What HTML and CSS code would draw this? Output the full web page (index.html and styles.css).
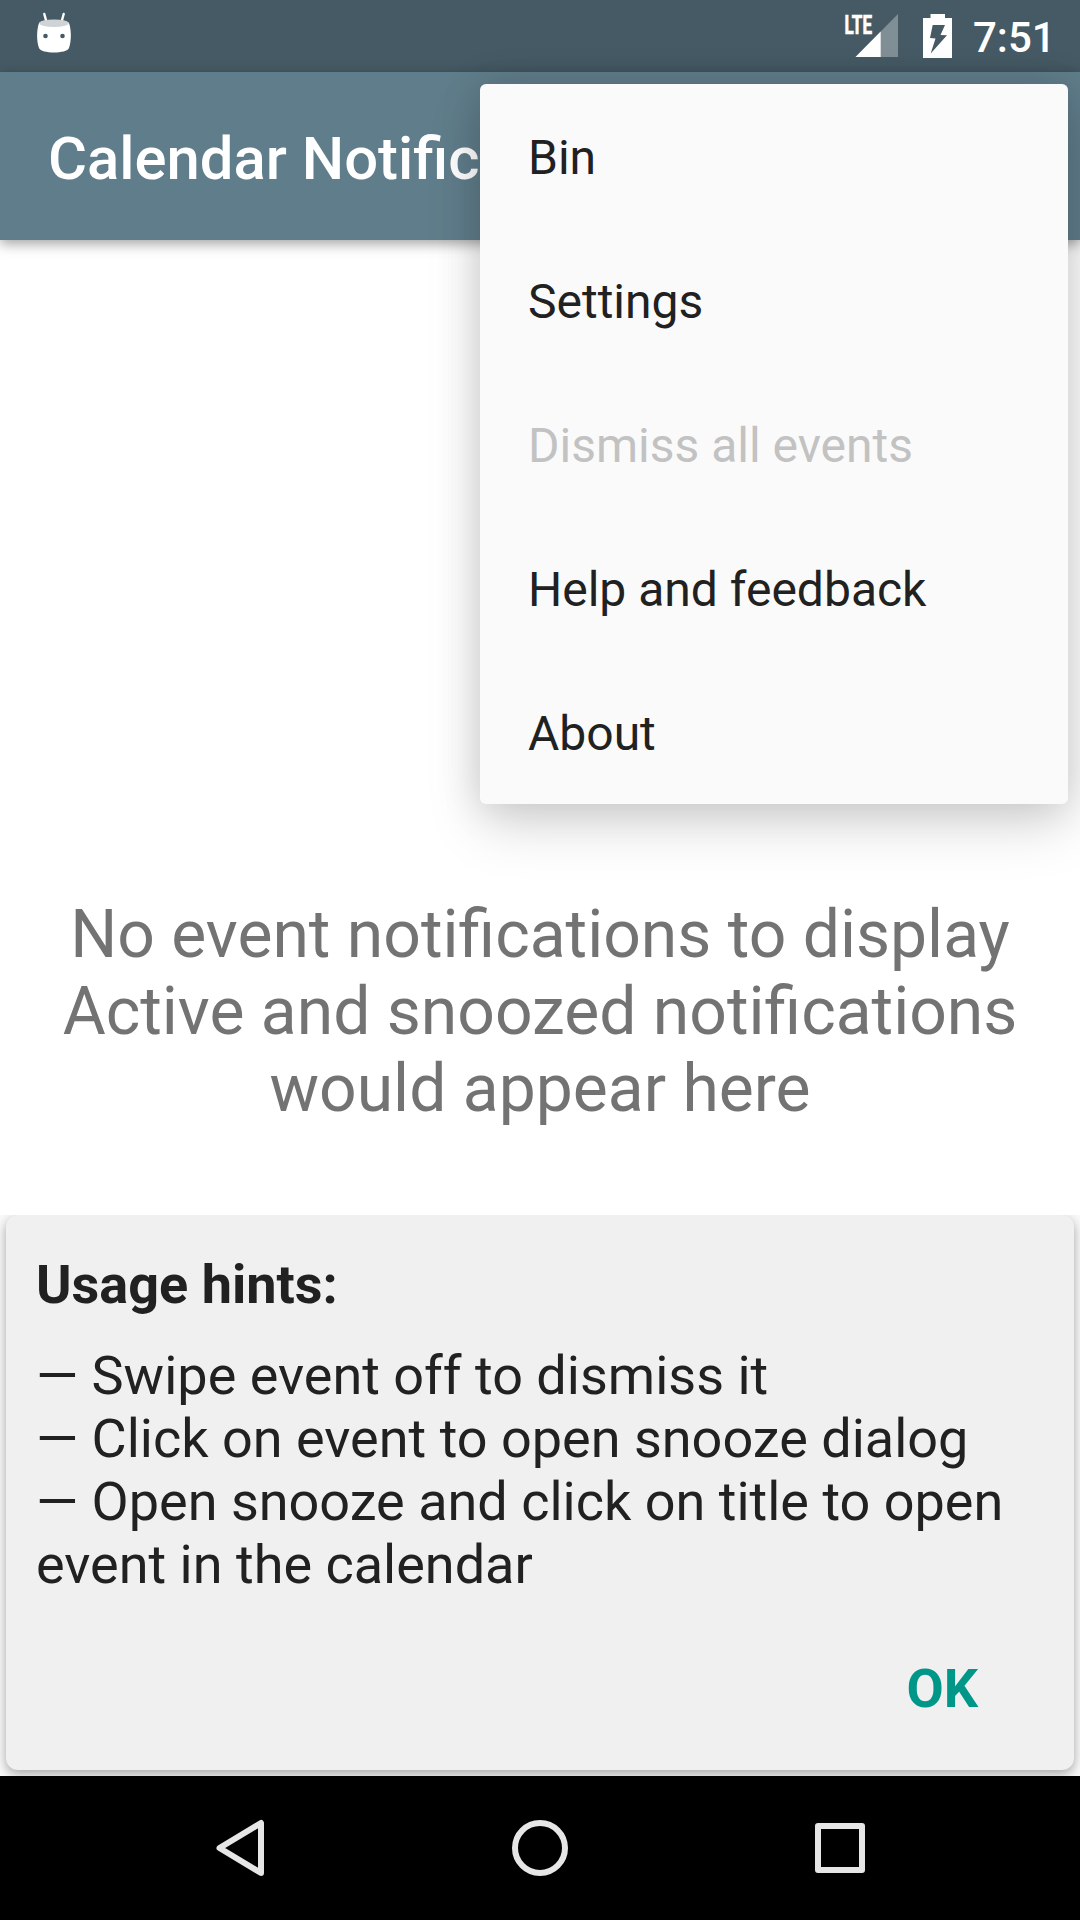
FILE: index.html
```html
<!DOCTYPE html>
<html lang="en">
<head>
<meta charset="utf-8">
<title>Calendar Notifications</title>
<link rel="stylesheet" href="styles.css">
</head>
<body>
<div class="screen">
  <header class="status-bar">
    <svg class="robot" width="36" height="44" viewBox="0 0 36 44">
      <path d="M8.300 4L10.500 12M27.700 4L25.500 12" stroke="#fff" stroke-width="2.400" stroke-linecap="round"/>
      <path d="M3 13C7 9 29 9 33 13C35.500 20 35.500 31 33 38C31 44 5 44 3 38C.500 31 .500 20 3 13Z" fill="#fff"/>
      <ellipse cx="18" cy="13.200" rx="14.700" ry="3.800" fill="#cfd3d6"/>
      <circle cx="9.500" cy="26" r="2.300" fill="#455a64"/>
      <circle cx="26.500" cy="26" r="2.300" fill="#455a64"/>
    </svg>
    <svg class="signal" width="56" height="50" viewBox="-1 -4 56 50">
      <path d="M53 2V45H10.500Z" fill="#fff" fill-opacity=".32"/>
      <path d="M35.700 19.500V45H10.500Z" fill="#fff"/>
      <text class="lte" x="-.5" y="21.500" textLength="27.500" lengthAdjust="spacingAndGlyphs">LTE</text>
    </svg>
    <svg class="battery" width="29" height="44" viewBox="0 0 29 44">
      <path fill="#fff" fill-rule="evenodd" d="M7.500 0H22V4H29V44H0V4H7.500ZM9.700 11L7 24L12.500 24.600L7.700 39.500L24 21.300L17.500 21L22 11Z"/>
    </svg>
    <span class="clock">7:51</span>
  </header>
  <div class="app-bar"><h1 class="title">Calendar Notifications</h1></div>
  <main class="content">
    <p class="empty">No event notifications to display<br>Active and snoozed notifications<br>would appear here</p>
  </main>
  <section class="hints">
    <div class="card">
      <h2 class="card-title">Usage hints:</h2>
      <p class="card-text">— Swipe event off to dismiss it<br>— Click on event to open snooze dialog<br>— Open snooze and click on title to open<br>event in the calendar</p>
      <button class="ok">OK</button>
    </div>
  </section>
  <nav class="nav-bar">
    <svg width="60" height="60" viewBox="0 0 60 60"><path d="M51 5V55L9.500 30Z"/></svg>
    <svg width="60" height="60" viewBox="0 0 60 60"><circle cx="30" cy="30" r="25"/></svg>
    <svg width="60" height="60" viewBox="0 0 60 60"><rect x="8" y="8" width="44" height="44"/></svg>
  </nav>
  <ul class="menu">
    <li>Bin</li>
    <li>Settings</li>
    <li class="disabled">Dismiss all events</li>
    <li>Help and feedback</li>
    <li>About</li>
  </ul>
</div>
</body>
</html>
```
FILE: styles.css
```css
* { box-sizing: border-box; margin: 0; padding: 0; }

body { font-family: Roboto, sans-serif; color: #212121; background: #fff; }

.screen {
  position: relative;
  display: flex;
  flex-direction: column;
  width: 1080px;
  height: 1920px;
  overflow: hidden;
}

.status-bar {
  display: flex;
  flex: none;
  align-items: flex-start;
  height: 72px;
  padding: 0 25px 0 36px;
  background: #455a64;
}
.robot { margin-top: 10px; }
.signal { margin: 8px 23px 0 auto; }
.battery { margin-top: 14px; }
.lte { font: 700 26px Roboto, sans-serif; fill: #fff; stroke: #fff; stroke-width: .7; }
.clock {
  width: 82px;
  margin: 13px 0 0 21px;
  font-size: 42px;
  font-weight: 500;
  line-height: 50px;
  color: #fff;
}

.app-bar {
  z-index: 1;
  display: flex;
  flex: none;
  align-items: center;
  height: 168px;
  padding: 6px 48px 0;
  background: #607d8b;
  box-shadow: 0 4px 12px rgba(0, 0, 0, .36);
}
.title { font-size: 59.8px; font-weight: 500; color: #fff; white-space: nowrap; }

.content { flex: 1; padding-top: 656px; }
.empty { font-size: 66px; line-height: 77px; text-align: center; color: #737373; }

.hints {
  flex: none;
  height: 561px;
  padding: 0 6px 6px;
  overflow: hidden;
  background: #fafafa;
}
.card {
  display: flex;
  flex-direction: column;
  height: 555px;
  padding: 38px 30px 0;
  border-radius: 12px;
  background: #f0f0f0;
  box-shadow: 0 4px 12px rgba(0, 0, 0, .34);
}
.card-title { font-size: 54px; font-weight: 700; line-height: 64px; }
.card-text { margin-top: 27px; font-size: 54px; line-height: 63px; }
.ok {
  align-self: flex-end;
  margin: 61px 66px 0 0;
  border: 0;
  background: none;
  font: 700 54px/64px Roboto, sans-serif;
  color: #009688;
}

.nav-bar {
  z-index: 1;
  display: flex;
  flex: none;
  align-items: center;
  justify-content: center;
  gap: 240px;
  height: 144px;
  background: #000;
}
.nav-bar svg { fill: none; stroke: #e6e6e6; stroke-width: 6; stroke-linejoin: round; }

/* Overflow menu, floating over the toolbar */
.menu {
  position: absolute;
  z-index: 2;
  top: 84px;
  right: 12px;
  width: 588px;
  border-radius: 6px;
  background: #fafafa;
  box-shadow: 0 24px 56px rgba(0, 0, 0, .13), 0 2px 40px rgba(0, 0, 0, .15);
  list-style: none;
}
.menu li {
  display: flex;
  align-items: center;
  height: 144px;
  padding: 3px 48px 0;
  font-size: 48px;
}
.menu .disabled { color: #c2c2c2; }
```
